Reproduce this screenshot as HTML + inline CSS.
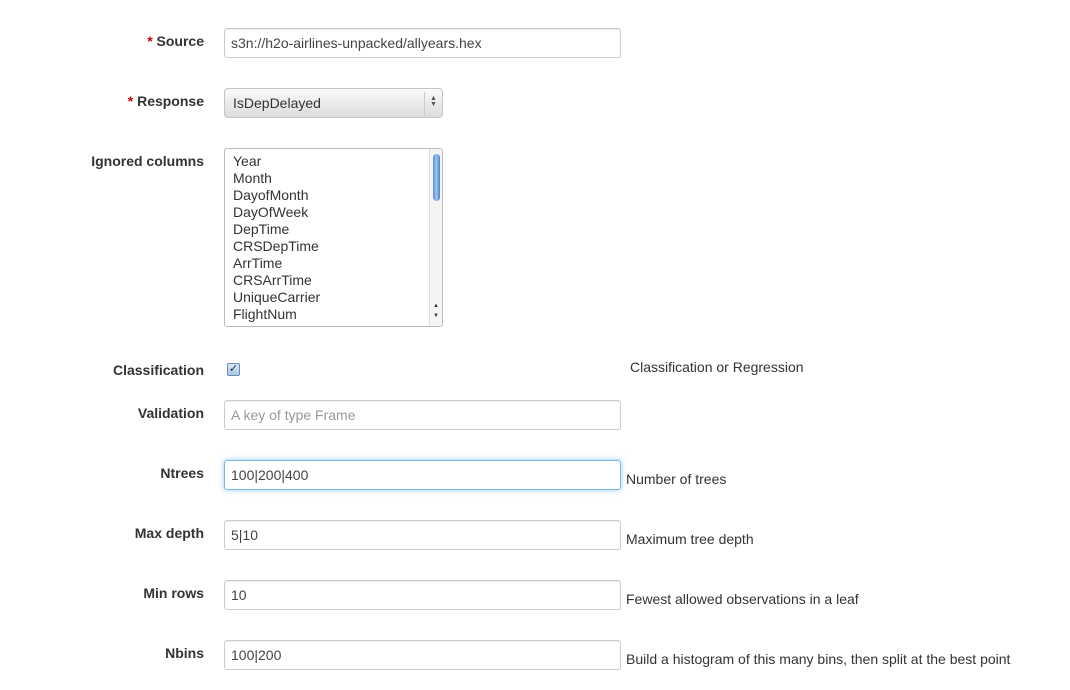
<!DOCTYPE html>
<html><head><style>
body{margin:0;width:1070px;height:690px;background:#fff;font-family:"Liberation Sans",Arial,sans-serif;font-size:14px;color:#333;position:relative;overflow:hidden}
.l{position:absolute;right:866px;font-weight:bold;white-space:nowrap;line-height:20px}
.l b{color:#c00}
.in{position:absolute;left:224px;width:389px;height:28px;border:1px solid #ccc;border-radius:3px;box-shadow:inset 0 1px 1px rgba(0,0,0,.075);line-height:28px;padding-left:6px;color:#444;white-space:nowrap}
.h{position:absolute;left:626px;white-space:nowrap;line-height:20px}
</style></head><body>
<div class="l" style="top:31px"><b>*</b> Source</div>
<div class="in" style="top:28px">s3n://h2o-airlines-unpacked/allyears.hex</div>

<div class="l" style="top:91px"><b>*</b> Response</div>
<div style="position:absolute;left:224px;top:88px;width:217px;height:28px;border:1px solid #c4c4c4;border-radius:4px;background:linear-gradient(#fafafa,#dcdcdc);line-height:28px">
<span style="padding-left:8px;color:#333">IsDepDelayed</span>
<div style="position:absolute;right:0;top:3px;width:17px;height:22px;border-left:1px solid #ccc;font-size:7px;line-height:6px;text-align:center;color:#555;padding-top:4px">▲<br>▼</div>
</div>

<div class="l" style="top:151px">Ignored columns</div>
<div style="position:absolute;left:224px;top:148px;width:217px;height:177px;border:1px solid #bbb;border-radius:3px;overflow:hidden">
<div style="padding:4px 0 0 8px;line-height:17px;color:#333">Year<br>Month<br>DayofMonth<br>DayOfWeek<br>DepTime<br>CRSDepTime<br>ArrTime<br>CRSArrTime<br>UniqueCarrier<br>FlightNum</div>
<div style="position:absolute;right:0;top:0;width:12px;height:177px;background:#f4f4f4;border-left:1px solid #ddd"></div>
<div style="position:absolute;right:2px;top:5px;width:7px;height:47px;border-radius:4px;background:linear-gradient(90deg,#5b8fd8,#9cc3f2,#4d7fc9)"></div>
<div style="position:absolute;right:1px;top:152px;width:10px;font-size:6px;line-height:10px;text-align:center">▲<br>▼</div>
</div>

<div class="l" style="top:360px">Classification</div>
<div style="position:absolute;left:227px;top:363px;width:11px;height:11px;border:1px solid #6b8cb3;border-radius:2px;background:linear-gradient(#dbe9f8,#a9c6e8);font-size:11px;line-height:10px;text-align:center;color:#1a2a44">✓</div>
<div class="h" style="left:630px;top:357px">Classification or Regression</div>

<div class="l" style="top:403px">Validation</div>
<div class="in" style="top:400px;color:#999">A key of type Frame</div>

<div class="l" style="top:463px">Ntrees</div>
<div class="in" style="top:460px;border-color:rgba(82,168,236,.8);box-shadow:0 0 6px rgba(82,168,236,.6)">100|200|400</div>
<div class="h" style="top:469px">Number of trees</div>

<div class="l" style="top:523px">Max depth</div>
<div class="in" style="top:520px">5|10</div>
<div class="h" style="top:529px">Maximum tree depth</div>

<div class="l" style="top:583px">Min rows</div>
<div class="in" style="top:580px">10</div>
<div class="h" style="top:589px">Fewest allowed observations in a leaf</div>

<div class="l" style="top:643px">Nbins</div>
<div class="in" style="top:640px">100|200</div>
<div class="h" style="top:649px">Build a histogram of this many bins, then split at the best point</div>
</body></html>
